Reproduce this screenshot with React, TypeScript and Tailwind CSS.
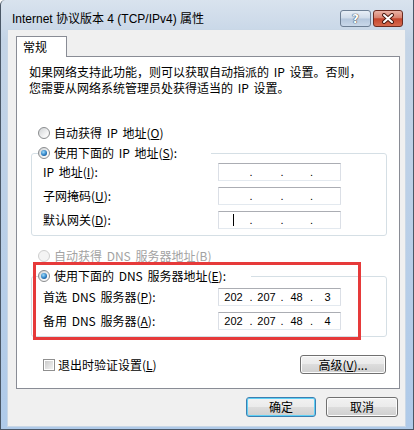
import React from "react";

const cjk = "font-['Noto_Sans_CJK_SC','Noto_Sans_CJK_JP',sans-serif]";
const ui = "font-['Liberation_Sans','Noto_Sans_CJK_SC',sans-serif]";

function Radio({ checked, disabled }: { checked?: boolean; disabled?: boolean }) {
  return (
    <span
      className={`inline-flex shrink-0 w-[12px] h-[12px] rounded-full border items-center justify-center ${
        disabled
          ? "border-[#cfcfcf] bg-[#f4f4f4]"
          : "border-[#8a8c8e] bg-[linear-gradient(135deg,#cfd2d4,#f7f7f7_70%)]"
      }`}
    >
      {checked && (
        <span className="w-[6px] h-[6px] rounded-full bg-[radial-gradient(circle_at_40%_35%,#9fdcfb,#2b7fc4_55%,#0c3a6e)]" />
      )}
    </span>
  );
}

function IpBox({ values, caret }: { values?: string[]; caret?: boolean }) {
  const v = values ?? ["", "", "", ""];
  return (
    <div
      className={`flex items-center w-[123px] h-[18px] bg-white border border-t-[#abadb3] border-x-[#dbdfe6] border-b-[#e3e9ef] ${ui} text-[11px] leading-4 text-black [word-spacing:0]`}
    >
      <span className="w-[29px] flex justify-center">
        {caret ? <span className="w-px h-[12px] bg-black" /> : v[0]}
      </span>
      <span className="w-[6px] text-center">.</span>
      <span className="w-[25px] text-center">{v[1]}</span>
      <span className="w-[6px] text-center">.</span>
      <span className="w-[23px] text-center">{v[2]}</span>
      <span className="w-[7px] text-center">.</span>
      <span className="flex-1 text-center">{v[3]}</span>
    </div>
  );
}

function Row({ label, children, first }: { label: React.ReactNode; children: React.ReactNode; first?: boolean }) {
  return (
    <div className={`flex items-center h-[18px] ${first ? "mt-0" : "mt-[6px]"}`}>
      <span className="w-[175px]">{label}</span>
      {children}
    </div>
  );
}

function Button({ children, primary, className }: { children: React.ReactNode; primary?: boolean; className?: string }) {
  return (
    <div
      className={`flex items-center justify-center rounded-[3px] border ${
        primary
          ? "border-[#3c7fb1] shadow-[inset_0_0_0_1px_#5fd0f5]"
          : "border-[#707070] shadow-[inset_0_0_0_1px_#fcfcfc]"
      } bg-[linear-gradient(to_bottom,#f2f2f2,#ebebeb_48%,#dddddd_50%,#cfcfcf)] ${cjk} text-[12px] leading-4 text-black ${className ?? ""}`}
    >
      {children}
    </div>
  );
}

export default function App() {
  return (
    <div className="w-[414px] h-[430px] overflow-hidden bg-[linear-gradient(to_bottom,#d9e3ee,#c4d4e6_40px,#afcae9)] border-x border-b border-[#4a5766] rounded-tl-[5px]">
      {/* title bar */}
      <div className="flex justify-between h-[29px]">
        <span className={`mt-[11px] ml-[11px] ${ui} text-[12px] leading-4 text-black`}>
          Internet 协议版本 4 (TCP/IPv4) 属性
        </span>
        <div className="flex gap-[2px] mt-[10px] mr-[10px]">
          <div className="w-[31px] h-[17px] rounded-[3px] border border-[#6d7f94] bg-[linear-gradient(to_bottom,#e7eef6,#cfdbe9_48%,#b4c6dc_52%,#c9d8ea)] flex items-center justify-center">
            <span className="font-['DejaVu_Sans',sans-serif] font-bold text-[12px] leading-none text-white [text-shadow:0_0_1px_#1e2b3a,0_0_1px_#1e2b3a]">
              ?
            </span>
          </div>
          <div className="w-[30px] h-[17px] rounded-[3px] border border-[#6b2b20] bg-[linear-gradient(to_bottom,#eab3a6,#d9826f_45%,#c5452c_52%,#d66a4e)] flex items-center justify-center">
            <svg width="14" height="11" viewBox="0 0 14 11">
              <path d="M3 2l8 7M11 2l-8 7" stroke="#4a1a10" strokeWidth="4" strokeLinecap="round" />
              <path d="M3 2l8 7M11 2l-8 7" stroke="#ffffff" strokeWidth="2" strokeLinecap="round" />
            </svg>
          </div>
        </div>
      </div>

      {/* client area */}
      <div className="ml-[6px] mr-[7px] h-[398px] bg-[#f0f0f0] border border-[#c9d7e6] flex flex-col">
        <div className={`ml-[8px] mt-[6px] w-[51px] h-[21px] -mb-px relative z-10 bg-white border-t border-x border-[#898c95] pl-[6px] pt-[2px] ${cjk} text-[12px] leading-4`}>
          常规
        </div>
        <div className={`relative ml-[8px] w-[384px] h-[333px] bg-white border border-[#898c95] flex flex-col ${cjk} text-[12px] leading-4 text-black [word-spacing:2px]`}>
          <p className="mt-[7px] ml-[12px]">
            如果网络支持此功能，则可以获取自动指派的 IP 设置。否则，
            <br />
            您需要从网络系统管理员处获得适当的 IP 设置。
          </p>

          <div className="flex items-center gap-[4px] h-4 mt-[29px] ml-[21px]">
            <Radio />
            <span>
              自动获得 IP 地址(<span className="underline">O</span>)
            </span>
          </div>

          <fieldset className="mt-[4px] ml-[14px] w-[356px] border border-[#d5dfe5] rounded-[3px] pb-[6px]">
            <legend className="ml-[6px] w-[173px] h-4">
              <span className="flex items-center gap-[4px]">
                <Radio checked />
                <span>
                  使用下面的 IP 地址(<span className="underline">S</span>):
                </span>
              </span>
            </legend>
            <div className="pl-[11px] mt-[2px]">
              <Row first label={<>IP 地址(<span className="underline">I</span>):</>}>
                <IpBox />
              </Row>
              <Row label={<>子网掩码(<span className="underline">U</span>):</>}>
                <IpBox />
              </Row>
              <Row label={<>默认网关(<span className="underline">D</span>):</>}>
                <IpBox caret />
              </Row>
            </div>
          </fieldset>

          <div className="flex items-center gap-[4px] h-4 mt-[12px] ml-[21px] text-[#a3a3a3]">
            <Radio disabled />
            <span>
              自动获得 DNS 服务器地址(<span className="underline">B</span>)
            </span>
          </div>

          <fieldset className="mt-[4px] ml-[14px] w-[356px] border border-[#d5dfe5] rounded-[3px] pb-[6px]">
            <legend className="ml-[6px] w-[213px] h-4">
              <span className="flex items-center gap-[4px]">
                <Radio checked />
                <span>
                  使用下面的 DNS 服务器地址(<span className="underline">E</span>):
                </span>
              </span>
            </legend>
            <div className="pl-[11px] mt-[4px]">
              <Row first label={<>首选 DNS 服务器(<span className="underline">P</span>):</>}>
                <IpBox values={["202", "207", "48", "3"]} />
              </Row>
              <Row label={<>备用 DNS 服务器(<span className="underline">A</span>):</>}>
                <IpBox values={["202", "207", "48", "4"]} />
              </Row>
            </div>
          </fieldset>

          <div className="flex items-center justify-between mt-[18px] ml-[26px] mr-[13px] h-[19px]">
            <div className="flex items-center gap-[3px]">
              <span className="w-[12px] h-[12px] border border-[#8f8f8f] bg-white p-px">
                <span className="block w-full h-full bg-[linear-gradient(135deg,#cbcbcb,#f2f2f2)]" />
              </span>
              <span>
                退出时验证设置(<span className="underline">L</span>)
              </span>
            </div>
            <Button className="w-[86px] h-[19px]">
              高级(<span className="underline">V</span>)...
            </Button>
          </div>

          {/* annotation rectangle */}
          <div className="absolute left-[16px] top-[205px] w-[328px] h-[78px] border-[3px] border-[#e63a3a]" />
        </div>

        <div className="flex justify-end gap-[10px] mt-[8px] mr-[7px]">
          <Button primary className="w-[70px] h-[20px]">
            确定
          </Button>
          <Button className="w-[72px] h-[20px]">取消</Button>
        </div>
      </div>
    </div>
  );
}
